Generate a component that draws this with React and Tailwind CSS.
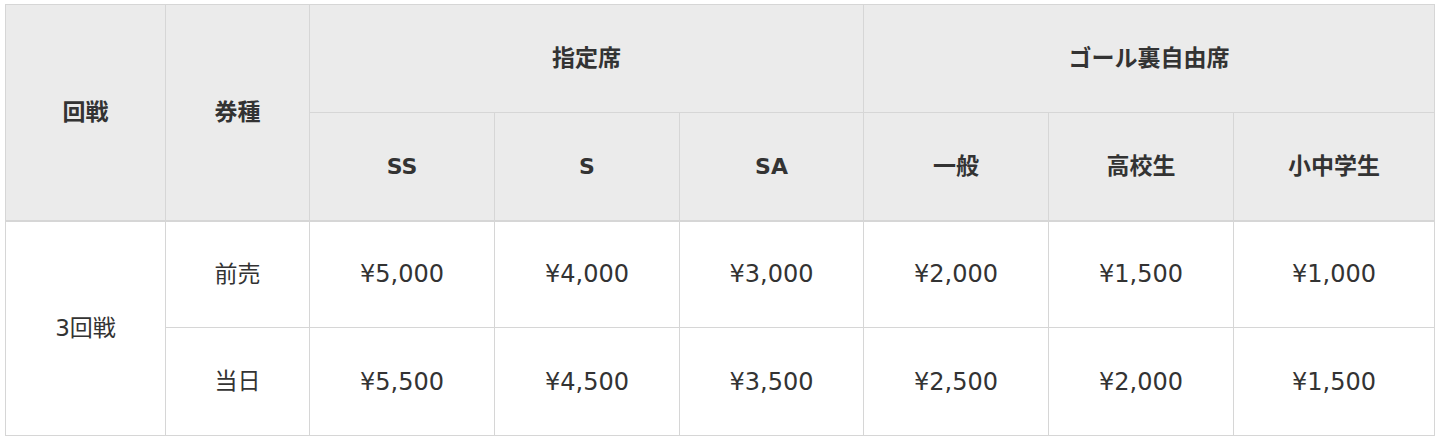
import React from "react";

export default function App() {
  const th = "border border-[#d6d6d6] bg-[#ebebeb] font-bold text-[#333] text-center align-middle";
  const td = "border border-[#d6d6d6] bg-white text-[#333] text-center align-middle";
  const pre = ["¥5,000", "¥4,000", "¥3,000", "¥2,000", "¥1,500", "¥1,000"];
  const day = ["¥5,500", "¥4,500", "¥3,500", "¥2,500", "¥2,000", "¥1,500"];
  const sub = [
    { t: "SS", latin: true },
    { t: "S", latin: true },
    { t: "SA", latin: true },
    { t: "一般" },
    { t: "高校生" },
    { t: "小中学生" },
  ];
  return (
    <div className="bg-white pt-[4px] pl-[5px] w-[1439px] h-[443px] font-['DejaVu_Sans','Noto_Sans_CJK_JP',sans-serif] text-[23px]">
      <table className="table-fixed w-[1429px] border-collapse">
        <colgroup>
          <col className="w-[160px]" />
          <col className="w-[144px]" />
          <col className="w-[185px]" />
          <col className="w-[185px]" />
          <col className="w-[184px]" />
          <col className="w-[185px]" />
          <col className="w-[185px]" />
          <col className="w-[201px]" />
        </colgroup>
        <thead>
          <tr className="h-[108px]">
            <th rowSpan={2} className={th + " border-b-2"}>回戦</th>
            <th rowSpan={2} className={th + " border-b-2"}>券種</th>
            <th colSpan={3} className={th}>指定席</th>
            <th colSpan={3} className={th}>ゴール裏自由席</th>
          </tr>
          <tr className="h-[108px]">
            {sub.map((s) => (
              <th key={s.t} className={th + " border-b-2"}>
                <span className={s.latin ? "text-[22px]" : ""}>{s.t}</span>
              </th>
            ))}
          </tr>
        </thead>
        <tbody>
          <tr className="h-[107px]">
            <td rowSpan={2} className={td}>3回戦</td>
            <td className={td}>前売</td>
            {pre.map((p, i) => (
              <td key={i} className={td + " text-[24px]"}>{p}</td>
            ))}
          </tr>
          <tr className="h-[108px]">
            <td className={td}>当日</td>
            {day.map((p, i) => (
              <td key={i} className={td + " text-[24px]"}>{p}</td>
            ))}
          </tr>
        </tbody>
      </table>
    </div>
  );
}
